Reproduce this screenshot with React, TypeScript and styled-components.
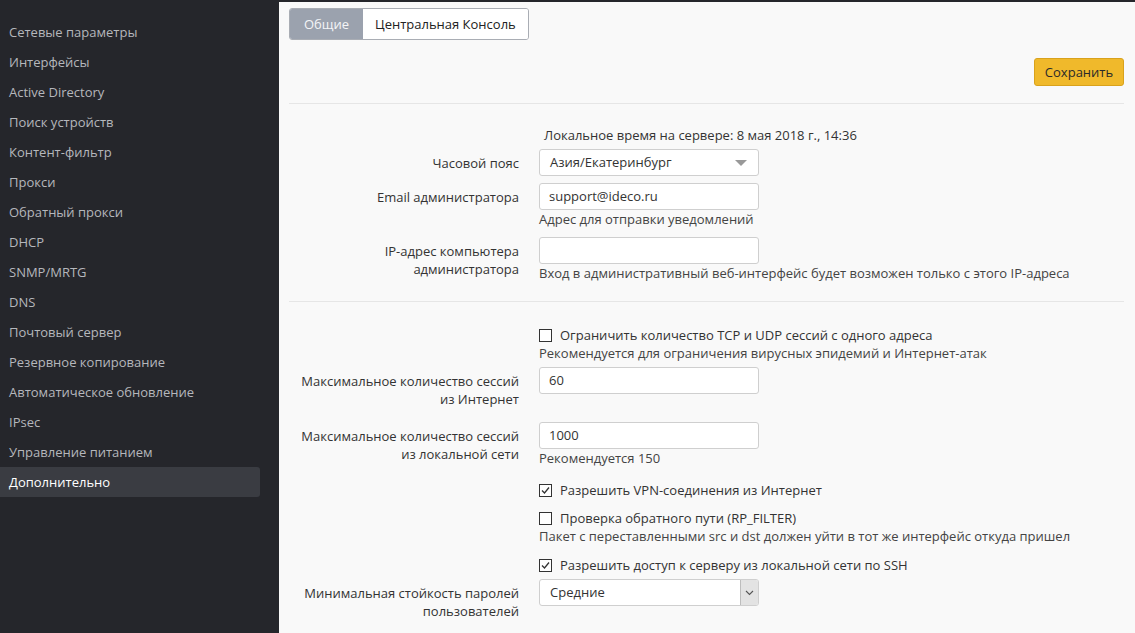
import React from "react";
import styled, { createGlobalStyle } from "styled-components";

const Global = createGlobalStyle`
  html, body { margin: 0; padding: 0; }
  body {
    font-family: "Open Sans", "Noto Sans", sans-serif;
    font-size: 13px;
    color: #333;
    background: #f9f9f9;
  }
  * { box-sizing: border-box; }
`;

const Page = styled.div`
  display: flex;
  width: 1135px;
  height: 633px;
  overflow: hidden;
`;

const Sidebar = styled.nav`
  width: 279px;
  flex: none;
  background: #25262b;
  padding: 17px 19px 0 0;
  display: flex;
  flex-direction: column;
`;

const NavItem = styled.div<{ $active?: boolean }>`
  height: 30px;
  line-height: 30px;
  padding-left: 9px;
  font-size: 13px;
  color: ${(p) => (p.$active ? "#ffffff" : "#b5b7bc")};
  background: ${(p) => (p.$active ? "#3a3c42" : "transparent")};
  border-radius: 0 3px 3px 0;
`;

const Main = styled.main`
  flex: 1;
  background: #f9f9f9;
  border-top: 2px solid #25262b;
  padding: 6px 11px 0 10px;
  display: flex;
  flex-direction: column;
`;

const Tabs = styled.div`
  display: flex;
  align-self: flex-start;
  border: 1px solid #a9adb4;
  border-radius: 3px;
  overflow: hidden;
  height: 32px;
`;

const Tab = styled.div<{ $active?: boolean }>`
  padding: 0 ${(p) => (p.$active ? "14px" : "12px")};
  line-height: 30px;
  font-size: 13px;
  background: ${(p) => (p.$active ? "#9ba2ae" : "#ffffff")};
  color: ${(p) => (p.$active ? "#f4f5f7" : "#222")};
`;

const Toolbar = styled.div`
  display: flex;
  justify-content: flex-end;
  padding-top: 18px;
  padding-bottom: 17px;
  border-bottom: 1px solid #e6e6e6;
`;

const SaveButton = styled.button`
  width: 90px;
  height: 28px;
  background: #f0b92b;
  border: 1px solid #d9a21c;
  border-radius: 3px;
  font-family: inherit;
  font-size: 13px;
  color: #2a2a2a;
  padding: 0;
`;

const Section = styled.section<{ $top: number; $bottom: number; $border?: boolean }>`
  padding-top: ${(p) => p.$top}px;
  padding-bottom: ${(p) => p.$bottom}px;
  border-bottom: ${(p) => (p.$border ? "1px solid #e6e6e6" : "none")};
`;

const Row = styled.div<{ $mt?: number }>`
  display: grid;
  grid-template-columns: 230px 1fr;
  column-gap: 20px;
  margin-top: ${(p) => p.$mt ?? 0}px;
`;

const Label = styled.div`
  text-align: right;
  line-height: 18px;
  padding-top: 5px;
  color: #333;
`;

const Control = styled.div`
  display: flex;
  flex-direction: column;
  align-items: flex-start;
`;

const Info = styled.div`
  line-height: 18px;
  padding-left: 5px;
  color: #333;
`;

const Help = styled.div`
  line-height: 18px;
  color: #444;
`;

const Input = styled.div`
  width: 220px;
  height: 27px;
  background: #fff;
  border: 1px solid #cfcfcf;
  border-radius: 3px;
  padding: 0 9px;
  line-height: 25px;
  color: #333;
`;

const SelectBox = styled.div`
  position: relative;
  width: 220px;
  height: 27px;
  background: #fff;
  border: 1px solid #cfcfcf;
  border-radius: 3px;
  padding: 0 10px;
  line-height: 25px;
  color: #333;
  display: flex;
  justify-content: space-between;
  align-items: center;
`;

const Caret = styled.span`
  width: 0;
  height: 0;
  border-left: 6px solid transparent;
  border-right: 6px solid transparent;
  border-top: 6px solid #999;
  margin-right: 1px;
`;

const NativeArrow = styled.span`
  position: absolute;
  right: 0;
  top: 0;
  bottom: 0;
  width: 18px;
  background: #e3e3e3;
  border-left: 1px solid #bdbdbd;
  border-radius: 0 2px 2px 0;
  display: flex;
  align-items: center;
  justify-content: center;
`;

const Check = styled.label`
  display: flex;
  align-items: center;
  gap: 8px;
  line-height: 18px;
  color: #333;
`;

const Box = styled.span`
  width: 13px;
  height: 13px;
  border: 1px solid #333;
  background: #fff;
  display: inline-flex;
  align-items: center;
  justify-content: center;
  flex: none;
`;

const CheckBox = ({ checked }: { checked?: boolean }) => (
  <Box>
    {checked && (
      <svg width="11" height="11" viewBox="0 0 11 11">
        <path d="M2 5.5 L4.5 8 L9 2.5" fill="none" stroke="#333" strokeWidth="1.3" />
      </svg>
    )}
  </Box>
);

const nav = [
  "Сетевые параметры",
  "Интерфейсы",
  "Active Directory",
  "Поиск устройств",
  "Контент-фильтр",
  "Прокси",
  "Обратный прокси",
  "DHCP",
  "SNMP/MRTG",
  "DNS",
  "Почтовый сервер",
  "Резервное копирование",
  "Автоматическое обновление",
  "IPsec",
  "Управление питанием",
  "Дополнительно",
];

export default function App() {
  return (
    <>
      <Global />
      <Page>
        <Sidebar>
          {nav.map((n) => (
            <NavItem key={n} $active={n === "Дополнительно"}>
              {n}
            </NavItem>
          ))}
        </Sidebar>
        <Main>
          <Tabs>
            <Tab $active>Общие</Tab>
            <Tab>Центральная Консоль</Tab>
          </Tabs>
          <Toolbar>
            <SaveButton>Сохранить</SaveButton>
          </Toolbar>

          <Section $top={22} $bottom={19} $border>
            <Row>
              <div />
              <Info>Локальное время на сервере: 8 мая 2018 г., 14:36</Info>
            </Row>
            <Row $mt={5}>
              <Label>Часовой пояс</Label>
              <Control>
                <SelectBox>
                  <span>Азия/Екатеринбург</span>
                  <Caret />
                </SelectBox>
              </Control>
            </Row>
            <Row $mt={7}>
              <Label>Email администратора</Label>
              <Control>
                <Input>support@ideco.ru</Input>
                <Help>Адрес для отправки уведомлений</Help>
              </Control>
            </Row>
            <Row $mt={9}>
              <Label>
                IP-адрес компьютера
                <br />
                администратора
              </Label>
              <Control>
                <Input />
                <Help>Вход в административный веб-интерфейс будет возможен только с этого IP-адреса</Help>
              </Control>
            </Row>
          </Section>

          <Section $top={24} $bottom={0}>
            <Row>
              <div />
              <Control>
                <Check>
                  <CheckBox />
                  Ограничить количество TCP и UDP сессий с одного адреса
                </Check>
                <Help>Рекомендуется для ограничения вирусных эпидемий и Интернет-атак</Help>
              </Control>
            </Row>
            <Row $mt={5}>
              <Label>
                Максимальное количество сессий
                <br />
                из Интернет
              </Label>
              <Control>
                <Input>60</Input>
              </Control>
            </Row>
            <Row $mt={14}>
              <Label>
                Максимальное количество сессий
                <br />
                из локальной сети
              </Label>
              <Control>
                <Input>1000</Input>
                <Help>Рекомендуется 150</Help>
              </Control>
            </Row>
            <Row $mt={14}>
              <div />
              <Control>
                <Check>
                  <CheckBox checked />
                  Разрешить VPN-соединения из Интернет
                </Check>
              </Control>
            </Row>
            <Row $mt={10}>
              <div />
              <Control>
                <Check>
                  <CheckBox />
                  Проверка обратного пути (RP_FILTER)
                </Check>
                <Help>Пакет с переставленными src и dst должен уйти в тот же интерфейс откуда пришел</Help>
              </Control>
            </Row>
            <Row $mt={11}>
              <div />
              <Control>
                <Check>
                  <CheckBox checked />
                  Разрешить доступ к серверу из локальной сети по SSH
                </Check>
              </Control>
            </Row>
            <Row $mt={5}>
              <Label>
                Минимальная стойкость паролей
                <br />
                пользователей
              </Label>
              <Control>
                <SelectBox>
                  <span>Средние</span>
                  <NativeArrow>
                    <svg width="9" height="6" viewBox="0 0 9 6">
                      <path d="M1 1 L4.5 4.5 L8 1" fill="none" stroke="#555" strokeWidth="1.1" />
                    </svg>
                  </NativeArrow>
                </SelectBox>
              </Control>
            </Row>
          </Section>
        </Main>
      </Page>
    </>
  );
}
